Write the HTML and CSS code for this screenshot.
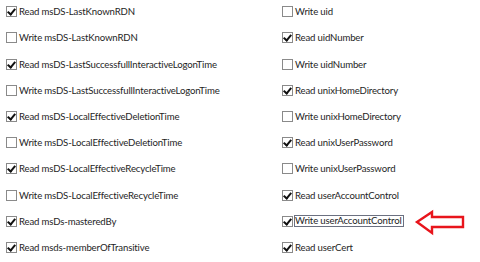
FILE: index.html
```html
<!DOCTYPE html>
<html lang="en">

<head>
    <meta charset="UTF-8">
    <title>Permissions</title>
    <link rel="stylesheet" href="styles.css">
</head>

<body>
    <div class="perms">
        <div class="col left">
            <label class="item"><span class="box on"></span>Read msDS-LastKnownRDN</label>
            <label class="item"><span class="box"></span>Write msDS-LastKnownRDN</label>
            <label class="item"><span class="box on"></span>Read msDS-LastSuccessfullInteractiveLogonTime</label>
            <label class="item"><span class="box"></span>Write msDS-LastSuccessfullInteractiveLogonTime</label>
            <label class="item"><span class="box on"></span>Read msDS-LocalEffectiveDeletionTime</label>
            <label class="item"><span class="box"></span>Write msDS-LocalEffectiveDeletionTime</label>
            <label class="item"><span class="box on"></span>Read msDS-LocalEffectiveRecycleTime</label>
            <label class="item"><span class="box"></span>Write msDS-LocalEffectiveRecycleTime</label>
            <label class="item"><span class="box on"></span>Read msDs-masteredBy</label>
            <label class="item"><span class="box on"></span>Read msds-memberOfTransitive</label>
        </div>
        <div class="col right">
            <label class="item"><span class="box"></span>Write uid</label>
            <label class="item"><span class="box on"></span>Read uidNumber</label>
            <label class="item"><span class="box"></span>Write uidNumber</label>
            <label class="item"><span class="box on"></span>Read unixHomeDirectory</label>
            <label class="item"><span class="box"></span>Write unixHomeDirectory</label>
            <label class="item"><span class="box on"></span>Read unixUserPassword</label>
            <label class="item"><span class="box"></span>Write unixUserPassword</label>
            <label class="item"><span class="box on"></span>Read userAccountControl</label>
            <label class="item"><span class="box on"></span><span class="focus">Write userAccountControl</span></label>
            <label class="item"><span class="box on"></span>Read userCert</label>
        </div>
    </div>

    <!-- red callout arrow pointing at the focused item -->
    <svg class="arrow" width="480" height="262" viewBox="0 0 480 262">
        <polygon points="417,222 432,212 432,217 463,217 463,227 432,227 432,233"
            fill="none" stroke="#e8151c" stroke-width="2.4" stroke-linejoin="miter" />
    </svg>
</body>

</html>
```

FILE: styles.css
```css
body {
    margin: 0;
    padding: 0;
    background-color: #fff;
    font-family: Lato, "Open Sans", sans-serif;
    font-size: 9.6px;
    letter-spacing: -0.15px;
    color: #1e1e1e;
}

.perms {
    display: flex;
}

.col {
    display: flex;
    flex-direction: column;
}

.left {
    width: 282px;
    padding-left: 6px;
    box-sizing: border-box;
}

.item {
    display: flex;
    align-items: center;
    height: 26.2px;
    margin-top: -1.4px;
    margin-bottom: 1.4px;
    white-space: nowrap;
}

.box {
    display: inline-block;
    width: 9px;
    height: 9px;
    border: 1px solid #8a8a8a;
    background: #fff;
    margin-right: 2px;
    flex-shrink: 0;
    position: relative;
}

.box.on::after {
    content: "";
    position: absolute;
    left: 2px;
    top: 0px;
    width: 3px;
    height: 6px;
    border-right: 2px solid #111;
    border-bottom: 2px solid #111;
    transform: rotate(40deg);
}

.focus {
    border: 1px solid #6b7080;
    line-height: 10px;
    padding: 0 1px 0 0;
    margin-left: -1px;
}

.arrow {
    position: absolute;
    left: 0;
    top: 0;
    pointer-events: none;
}
```
